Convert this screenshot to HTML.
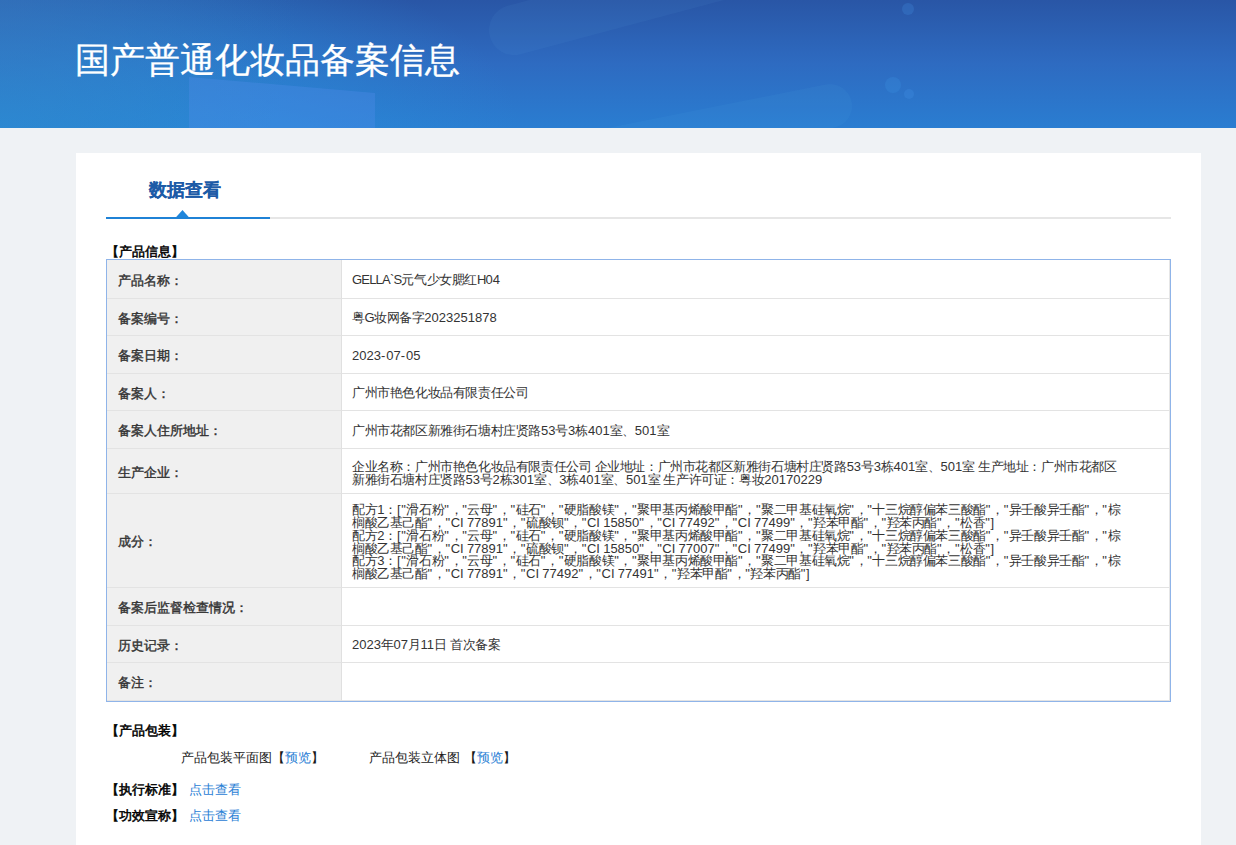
<!DOCTYPE html>
<html><head><meta charset="utf-8">
<style>
html,body{margin:0;padding:0;}
body{width:1236px;height:845px;overflow:hidden;background:#eff2f5;font-family:"Liberation Sans",sans-serif;position:relative;color:#333;}
.hd{position:absolute;left:0;top:0;width:1236px;height:128px;background:linear-gradient(180deg,#2956a6 0%,#2e6bc1 50%,#2a7dd1 100%);overflow:hidden;}
.hd h1{position:absolute;left:75px;top:36.5px;margin:0;font-size:34.7px;font-weight:normal;-webkit-text-stroke:0.3px #fff;color:#fff;line-height:46px;white-space:nowrap;}
.card{position:absolute;left:76px;top:153px;width:1125px;height:700px;background:#fff;}
.tab{position:absolute;left:73px;top:24px;font-size:18px;font-weight:bold;color:#1d5ba7;line-height:26px;-webkit-text-stroke:0.12px #1d5ba7;white-space:nowrap;}
.tline{position:absolute;left:30px;top:64px;width:1065px;height:2px;background:#e6e6e6;}
.tblue{position:absolute;left:30px;top:64px;width:164px;height:2px;background:#1f82d6;}
.tri{position:absolute;left:99px;top:57px;width:0;height:0;border-left:7px solid transparent;border-right:7px solid transparent;border-bottom:7px solid #1a7dd0;}
.sec{position:absolute;font-size:13px;font-weight:normal;-webkit-text-stroke:0.5px #000;color:#000;line-height:16px;white-space:nowrap;}
table{position:absolute;left:30px;top:106px;width:1065px;border-collapse:separate;border-spacing:0;border:1px solid #8fb4e9;table-layout:fixed;}
td{font-size:13px;border-bottom:1px solid #e3e3e3;padding:0;white-space:nowrap;vertical-align:middle;}
td.l{width:235px;box-sizing:border-box;background:#f0f0f0;font-weight:normal;-webkit-text-stroke:0.4px #333;color:#333;padding-left:11px;padding-top:3px;border-right:1px solid #e0e0e0;}
td.v{padding-left:10px;padding-top:2px;color:#333;letter-spacing:-0.4px;}
td.v{border-right:1px solid #e6e6e6;}
td.ml2{line-height:13px;padding-top:3px;}
td.ml6{line-height:12.7px;padding-top:4px;}
i{font-style:normal;}
i.d{font-size:13.0px;letter-spacing:0;}
i.u{letter-spacing:-0.8px;}
i.ci{letter-spacing:0;}
i.h{letter-spacing:1px;}
i.q{letter-spacing:0.6px;}
.plain{position:absolute;font-size:13px;color:#1a1a1a;line-height:16px;white-space:nowrap;}
.lnk{color:#2a80d5;}
</style></head><body>
<div class="hd">
<svg width="1236" height="128" style="position:absolute;left:0;top:0">
<defs>
<radialGradient id="rg1" cx="0" cy="128" r="520" gradientUnits="userSpaceOnUse" gradientTransform="translate(0,128) scale(1,0.4) translate(0,-128)"><stop offset="0" stop-color="#2692dc" stop-opacity="0.95"/><stop offset="0.5" stop-color="#2890da" stop-opacity="0.5"/><stop offset="1" stop-color="#2a90da" stop-opacity="0"/></radialGradient>
<radialGradient id="rg2" cx="0" cy="0" r="300" gradientUnits="userSpaceOnUse"><stop offset="0" stop-color="#3a72b8" stop-opacity="0.5"/><stop offset="1" stop-color="#3a72b8" stop-opacity="0"/></radialGradient>
</defs>
<rect width="1236" height="128" fill="url(#rg1)"/>
<rect width="1236" height="128" fill="url(#rg2)"/>
<polygon points="189,77 375,93 375,128 189,128" fill="#5a8ff0" fill-opacity="0.28"/>
<line x1="514" y1="30" x2="950" y2="-86" stroke="#8fd0ff" stroke-opacity="0.05" stroke-width="50" stroke-linecap="round"/>
<line x1="560" y1="160" x2="830" y2="106" stroke="#7fd0ff" stroke-opacity="0.05" stroke-width="44" stroke-linecap="round"/>
<circle cx="908" cy="9" r="6" fill="#4a9aee" fill-opacity="0.22"/>
<circle cx="893" cy="85" r="8" fill="#3f9aea" fill-opacity="0.22"/>
<circle cx="909" cy="94" r="5" fill="#4a9aee" fill-opacity="0.22"/>
</svg>
<h1>国产普通化妆品备案信息</h1>
</div>
<div class="card">
<div class="tab">数据查看</div>
<div class="tline"></div><div class="tblue"></div><svg style="position:absolute;left:90px;top:50px" width="30" height="20"><polygon points="10.2,14 16.5,7 22.7,14" fill="#1f86dc"/></svg>
<div class="sec" style="left:30px;top:91px;">【产品信息】</div>
<table>
<tr style="height:39px"><td class="l">产品名称：</td><td class="v"><i class="u">GELLA`S</i>元气少女腮红<i class="u">H</i><i class="d">04</i></td></tr>
<tr style="height:37px"><td class="l">备案编号：</td><td class="v">粤<i class="u">G</i>妆网备字<i class="d">2023251878</i></td></tr>
<tr style="height:38px"><td class="l">备案日期：</td><td class="v"><i class="d">2023</i><i class="h">-</i><i class="d">07</i><i class="h">-</i><i class="d">05</i></td></tr>
<tr style="height:37px"><td class="l">备案人：</td><td class="v">广州市艳色化妆品有限责任公司</td></tr>
<tr style="height:38px"><td class="l">备案人住所地址：</td><td class="v">广州市花都区新雅街石塘村庄贤路<i class="d">53</i>号<i class="d">3</i>栋<i class="d">401</i>室、<i class="d">501</i>室</td></tr>
<tr style="height:45px"><td class="l">生产企业：</td><td class="v ml2">企业名称：广州市艳色化妆品有限责任公司 企业地址：广州市花都区新雅街石塘村庄贤路<i class="d">53</i>号<i class="d">3</i>栋<i class="d">401</i>室、<i class="d">501</i>室 生产地址：广州市花都区<br>新雅街石塘村庄贤路<i class="d">53</i>号<i class="d">2</i>栋<i class="d">301</i>室、<i class="d">3</i>栋<i class="d">401</i>室、<i class="d">501</i>室 生产许可证：粤妆<i class="d">20170229</i></td></tr>
<tr style="height:94px"><td class="l">成分：</td><td class="v ml6">配方<i class="d">1</i>：<i class="q">["</i>滑石粉<i class="q">"</i>，<i class="q">"</i>云母<i class="q">"</i>，<i class="q">"</i>硅石<i class="q">"</i>，<i class="q">"</i>硬脂酸镁<i class="q">"</i>，<i class="q">"</i>聚甲基丙烯酸甲酯<i class="q">"</i>，<i class="q">"</i>聚二甲基硅氧烷<i class="q">"</i>，<i class="q">"</i>十三烷醇偏苯三酸酯<i class="q">"</i>，<i class="q">"</i>异壬酸异壬酯<i class="q">"</i>，<i class="q">"</i>棕<br>榈酸乙基己酯<i class="q">"</i>，<i class="q">"</i><i class="ci">CI</i> <i class="d">77891</i><i class="q">"</i>，<i class="q">"</i>硫酸钡<i class="q">"</i>，<i class="q">"</i><i class="ci">CI</i> <i class="d">15850</i><i class="q">"</i>，<i class="q">"</i><i class="ci">CI</i> <i class="d">77492</i><i class="q">"</i>，<i class="q">"</i><i class="ci">CI</i> <i class="d">77499</i><i class="q">"</i>，<i class="q">"</i>羟苯甲酯<i class="q">"</i>，<i class="q">"</i>羟苯丙酯<i class="q">"</i>，<i class="q">"</i>松香<i class="q">"]</i><br>配方<i class="d">2</i>：<i class="q">["</i>滑石粉<i class="q">"</i>，<i class="q">"</i>云母<i class="q">"</i>，<i class="q">"</i>硅石<i class="q">"</i>，<i class="q">"</i>硬脂酸镁<i class="q">"</i>，<i class="q">"</i>聚甲基丙烯酸甲酯<i class="q">"</i>，<i class="q">"</i>聚二甲基硅氧烷<i class="q">"</i>，<i class="q">"</i>十三烷醇偏苯三酸酯<i class="q">"</i>，<i class="q">"</i>异壬酸异壬酯<i class="q">"</i>，<i class="q">"</i>棕<br>榈酸乙基己酯<i class="q">"</i>，<i class="q">"</i><i class="ci">CI</i> <i class="d">77891</i><i class="q">"</i>，<i class="q">"</i>硫酸钡<i class="q">"</i>，<i class="q">"</i><i class="ci">CI</i> <i class="d">15850</i><i class="q">"</i>，<i class="q">"</i><i class="ci">CI</i> <i class="d">77007</i><i class="q">"</i>，<i class="q">"</i><i class="ci">CI</i> <i class="d">77499</i><i class="q">"</i>，<i class="q">"</i>羟苯甲酯<i class="q">"</i>，<i class="q">"</i>羟苯丙酯<i class="q">"</i>，<i class="q">"</i>松香<i class="q">"]</i><br>配方<i class="d">3</i>：<i class="q">["</i>滑石粉<i class="q">"</i>，<i class="q">"</i>云母<i class="q">"</i>，<i class="q">"</i>硅石<i class="q">"</i>，<i class="q">"</i>硬脂酸镁<i class="q">"</i>，<i class="q">"</i>聚甲基丙烯酸甲酯<i class="q">"</i>，<i class="q">"</i>聚二甲基硅氧烷<i class="q">"</i>，<i class="q">"</i>十三烷醇偏苯三酸酯<i class="q">"</i>，<i class="q">"</i>异壬酸异壬酯<i class="q">"</i>，<i class="q">"</i>棕<br>榈酸乙基己酯<i class="q">"</i>，<i class="q">"</i><i class="ci">CI</i> <i class="d">77891</i><i class="q">"</i>，<i class="q">"</i><i class="ci">CI</i> <i class="d">77492</i><i class="q">"</i>，<i class="q">"</i><i class="ci">CI</i> <i class="d">77491</i><i class="q">"</i>，<i class="q">"</i>羟苯甲酯<i class="q">"</i>，<i class="q">"</i>羟苯丙酯<i class="q">"]</i></td></tr>
<tr style="height:38px"><td class="l">备案后监督检查情况：</td><td class="v"></td></tr>
<tr style="height:37px"><td class="l">历史记录：</td><td class="v"><i class="d">2023</i>年<i class="d">07</i>月<i class="d">11</i>日 首次备案</td></tr>
<tr style="height:38px"><td class="l nb">备注：</td><td class="v nb"></td></tr>
</table>
<div class="sec" style="left:30px;top:570px;">【产品包装】</div>
<div class="plain" style="left:105px;top:597px;">产品包装平面图【<span class="lnk">预览</span>】</div>
<div class="plain" style="left:293px;top:597px;">产品包装立体图 【<span class="lnk">预览</span>】</div>
<div class="sec" style="left:30px;top:628.5px;">【执行标准】 <span class="lnk" style="-webkit-text-stroke:0;margin-left:1px">点击查看</span></div>
<div class="sec" style="left:30px;top:654.5px;">【功效宣称】 <span class="lnk" style="-webkit-text-stroke:0;margin-left:1px">点击查看</span></div>
</div>
</body></html>
